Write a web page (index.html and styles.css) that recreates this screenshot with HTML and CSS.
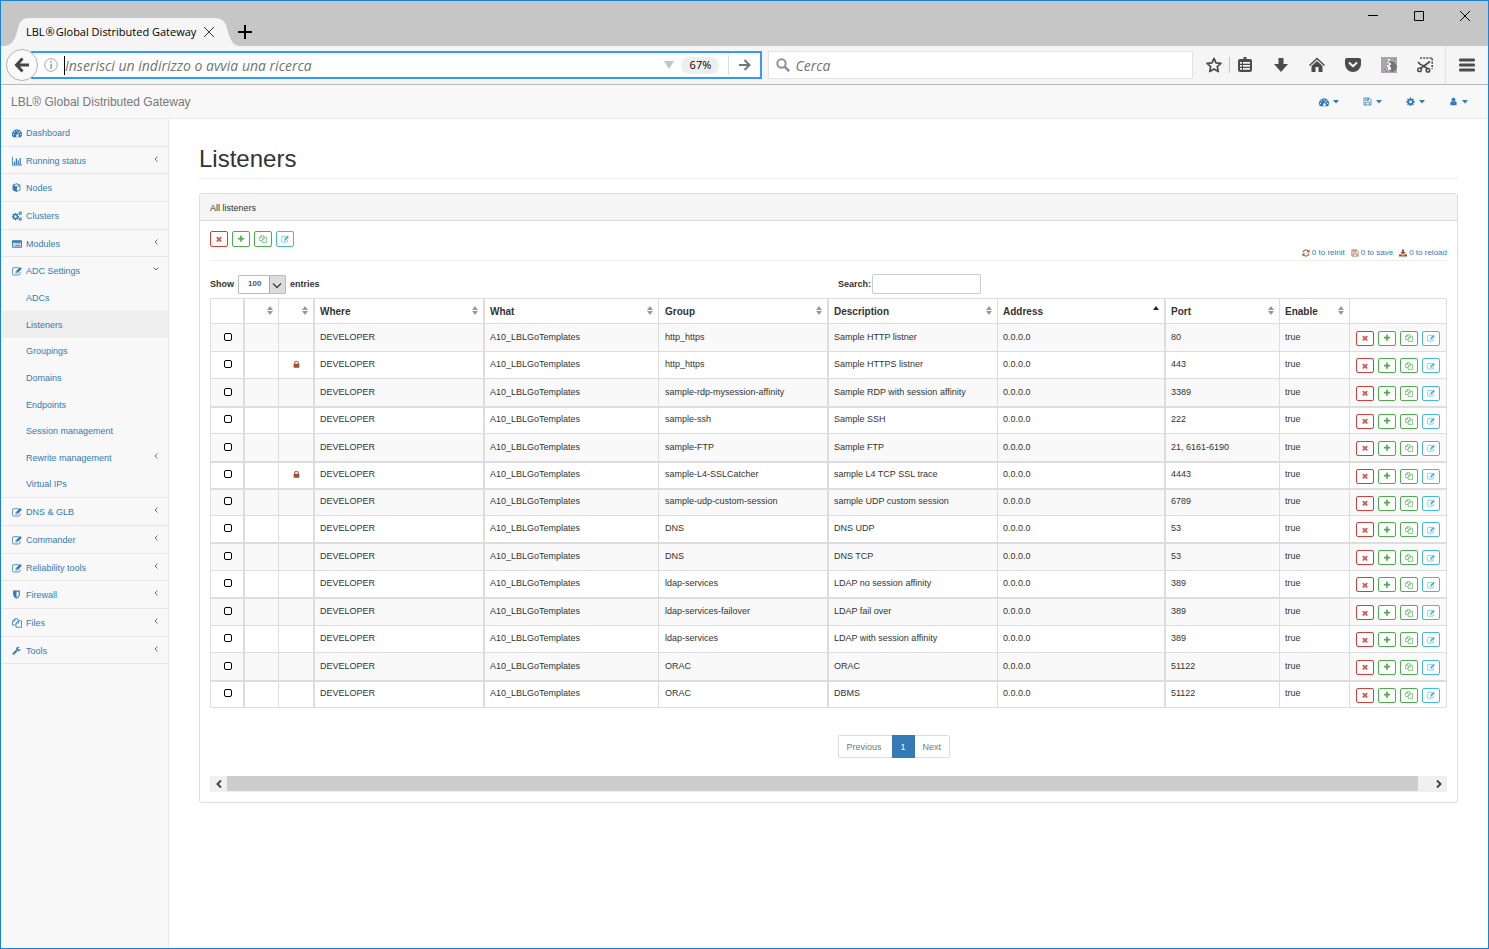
FILE: index.html
```html
<!DOCTYPE html>
<html lang="en">
<head>
<meta charset="utf-8">
<title>LBL® Global Distributed Gateway</title>
<link rel="stylesheet" href="styles.css">
</head>
<body>
<svg class="sprite" aria-hidden="true">
  <symbol id="i-times" viewBox="0 0 1792 1792"><path d="M1490 1322q0 40-28 68l-136 136q-28 28-68 28t-68-28l-294-294-294 294q-28 28-68 28t-68-28l-136-136q-28-28-28-68t28-68l294-294-294-294q-28-28-28-68t28-68l136-136q28-28 68-28t68 28l294 294 294-294q28-28 68-28t68 28l136 136q28 28 28 68t-28 68l-294 294 294 294q28 28 28 68z"/></symbol>
  <symbol id="i-plus" viewBox="0 0 1792 1792"><path d="M1600 736v192q0 40-28 68t-68 28h-416v416q0 40-28 68t-68 28h-192q-40 0-68-28t-28-68v-416h-416q-40 0-68-28t-28-68v-192q0-40 28-68t68-28h416v-416q0-40 28-68t68-28h192q40 0 68 28t28 68v416h416q40 0 68 28t28 68z"/></symbol>
  <symbol id="i-lock" viewBox="0 0 1792 1792"><path d="M640 768h512v-192q0-106-75-181t-181-75-181 75-75 181v192zm832 96v576q0 40-28 68t-68 28h-960q-40 0-68-28t-28-68v-576q0-40 28-68t68-28h32v-192q0-184 132-316t316-132 316 132 132 316v192h32q40 0 68 28t28 68z"/></symbol>
  <symbol id="i-user" viewBox="0 0 1792 1792"><path d="M1536 1399q0 109-62 187t-151 78h-854q-88 0-150-78t-63-187q0-85 9-160t31-152 58-131 94-89 135-35q131 128 313 128t313-128q76 0 135 35t94 89 58 131 31 152 9 160zm-256-887q0 159-112 272t-272 112-272-112-112-272 112-272 272-112 272 112 112 272z"/></symbol>
  <symbol id="i-wrench" viewBox="0 0 1792 1792"><path d="M448 1472q0-26-19-45t-45-19-45 19-19 45 19 45 45 19 45-19 19-45zm644-420l-682 682q-37 37-90 37-52 0-91-37l-106-108q-38-36-38-90 0-53 38-91l681-681q39 98 114 173t174 115zm634-435q0 39-23 106-47 134-164 217t-259 84q-185 0-316-132t-132-316 132-316 316-132q58 0 121 16t108 47q16 11 16 28t-16 28l-293 169v224l193 107q5-3 79-48t135-81 71-36q15 0 23 10t9 25z"/></symbol>
  <symbol id="i-dash" viewBox="0 0 16 16"><path fill-rule="evenodd" d="M8 2a8 8 0 0 0-6.700 12.300q.2.400.7.400h12q.5 0 .7-.4A8 8 0 0 0 8 2zM8 3.400a1.100 1.100 0 1 1 0 2.200 1.100 1.100 0 0 1 0-2.200zM4 5a1.100 1.100 0 1 1 0 2.200A1.100 1.100 0 0 1 4 5zM2.400 9a1.100 1.100 0 1 1 0 2.200 1.100 1.100 0 0 1 0-2.200zM13.600 9a1.100 1.100 0 1 1 0 2.200 1.100 1.100 0 0 1 0-2.200zM12 5a1.100 1.100 0 1 1 0 2.200A1.100 1.100 0 0 1 12 5zM9.900 6.500l.9.300-1.100 4a1.900 1.900 0 1 1-1-.3z"/></symbol>
  <symbol id="i-chart" viewBox="0 0 16 16"><path d="M0 1h1.300v12.700H16V15H0zM3 9h2v4H3zM6 4h2v9H6zM9 7h2v6H9zM12 3h2v10h-2z"/></symbol>
  <symbol id="i-cube" viewBox="0 0 16 16"><path fill-rule="evenodd" d="M8 .5l6.500 2.600q.5.300.5 1V12q0 .6-.5.900L8 15.900 1.500 12.900Q1 12.600 1 12V4.100q0-.7.5-1zM8 2L3 4l5 2 5-2zM8.800 14l4.700-2.200V5.500L8.800 7.400z"/></symbol>
  <symbol id="i-cogs" viewBox="0 0 16 16"><path fill-rule="evenodd" d="M4.600 3h1.800l.3 1.500 1 .4L9 4.200l1.200 1.200-.8 1.300.4 1 1.500.3v1.800l-1.500.3-.4 1 .8 1.300L9 13.600l-1.300-.8-1 .4-.3 1.500H4.600l-.3-1.500-1-.4-1.300.8-1.200-1.200.8-1.300-.4-1L0 9.800V8l1.200-.3.4-1-.8-1.300L2 4.200l1.300.7 1-.4zM5.500 6.800a2.100 2.100 0 1 0 0 4.200 2.100 2.100 0 0 0 0-4.200zM13 0l1 1.200h1.500V3l.5.800-1 1.300-.4 1.200-1.600-.4-1.300.3-.6-1.400L10 3.900l.8-1.200.2-1.300h1.300zM13 2.400a1 1 0 1 0 0 2 1 1 0 0 0 0-2zM13 9.500l1 1.200h1.500v1.600l.5 1-1 1.200-.4 1.200-1.600-.4-1.300.4-.6-1.500-1.100-.8.800-1.300.2-1.300h1.300zM13 11.800a1 1 0 1 0 0 2 1 1 0 0 0 0-2z"/></symbol>
  <symbol id="i-list" viewBox="0 0 16 16"><path fill-rule="evenodd" d="M1.300 2h13.400Q16 2 16 3.300v9.400q0 1.300-1.300 1.300H1.300Q0 14 0 12.700V3.300Q0 2 1.300 2zM1.500 6v6.500h13V6z"/><path d="M2.500 7h1.500v1.500H2.500zM5 7h8.500v1.500H5zM2.500 10h1.500v1.500H2.500zM5 10h8.500v1.500H5z"/></symbol>
  <symbol id="i-edit" viewBox="0 0 16 16"><path fill="none" stroke="currentColor" stroke-width="1.300" d="M11 2.700H3Q.7 2.700.7 5v7Q.7 14.300 3 14.300h7.500q2.300 0 2.300-2.300V9.800"/><path fill-rule="evenodd" d="M13 1.500L15.800 4.300 8.500 11.600H5.700V8.800zM6.800 9.300v1.200h1.200l.7-.7L7.500 8.600z"/></symbol>
  <symbol id="i-shield" viewBox="0 0 16 16"><path fill-rule="evenodd" d="M2 1h12v7.500q0 4-6 7-6-3-6-7zM8 3v10.300q4-2.200 4-4.800V3z"/></symbol>
  <symbol id="i-copy" viewBox="0 0 16 16"><path fill="none" stroke="currentColor" stroke-width="1.300" d="M6 11.300H.8V5L4.600 1.200h4.700V4M4.700 1.200v3.700H.8M6.400 8.200l3.800-3.800h5v10.400H6.400zM10.300 4.400v3.800H6.400"/></symbol>
  <symbol id="i-save" viewBox="0 0 16 16"><path fill="none" stroke="currentColor" stroke-width="1.300" d="M1.700 1.700h9.600l3 3v9.600H1.700zM4.200 14V9.500h7.600V14M4.200 2v4h6V2"/><path d="M7.500 2.300h1.800v2.900H7.500z"/></symbol>
  <symbol id="i-cog" viewBox="0 0 16 16"><path fill-rule="evenodd" d="M6.900 1h2.200l.4 2 1.400.6 1.700-1.100 1.600 1.600-1.200 1.600.6 1.400 2 .4v2.200l-2 .4-.6 1.300 1.200 1.700-1.600 1.600-1.700-1.200-1.400.6-.4 2H6.900l-.4-2-1.300-.6-1.700 1.200-1.600-1.600L3 11.400l-.5-1.300-2.100-.4V7.500l2.100-.4L3 5.700 1.900 4.100l1.600-1.600 1.700 1.100L6.500 3zM8 6a2.600 2.600 0 1 0 0 5.200A2.600 2.600 0 0 0 8 6z"/></symbol>
  <symbol id="i-refresh" viewBox="0 0 16 16"><path fill="none" stroke="currentColor" stroke-width="2.200" d="M2 6.800A6.200 6.200 0 0 1 12.700 4M14 9.200A6.200 6.200 0 0 1 3.300 12"/><path d="M15 1v6H9zM1 15V9h6z"/></symbol>
  <symbol id="i-down" viewBox="0 0 16 16"><path d="M6 1h4v5h3.500L8 11.500 2.500 6H6zM0 10.500h4.500L8 13.500l3.500-3H16V15H0z"/></symbol>
  <symbol id="i-left" viewBox="0 0 8 8"><path fill="none" stroke="currentColor" stroke-width="1" d="M5.500 1.500L3 4l2.500 2.500"/></symbol>
  <symbol id="i-open" viewBox="0 0 8 8"><path fill="none" stroke="currentColor" stroke-width="1" d="M1.500 2.500L4 5l2.500-2.500"/></symbol>
  <symbol id="i-caret" viewBox="0 0 6 4"><path d="M0 0h6L3 3.500z"/></symbol>
  <symbol id="i-sort" viewBox="0 0 8 9"><path d="M1 4L4 0l3 4zM1 5h6L4 9z"/></symbol>
</svg>

<div class="window">
  <header class="titlebar">
    <div class="tab">
      <svg class="tab-shape" viewBox="0 0 234 28" aria-hidden="true"><path fill="#f5f5f5" d="M0 28Q8 27 11 17L14 7Q16 0 24 0H210Q218 0 221 7L224 17Q227 27 234 28z"/></svg>
      <span class="tab-title">LBL<span class="reg">®</span>Global Distributed Gateway</span>
      <button class="plain tab-close" aria-label="Close tab"><svg viewBox="0 0 10 10"><path fill="none" stroke="#333" d="M0 0l10 10M10 0L0 10"/></svg></button>
    </div>
    <button class="plain tab-new" aria-label="New tab"><svg viewBox="0 0 14 14"><path d="M6 0h2v6h6v2H8v6H6V8H0V6h6z"/></svg></button>
    <div class="win-buttons">
      <button class="plain" aria-label="Minimize"><svg viewBox="0 0 10 10"><path fill="none" stroke="#000" d="M0 4.500h10"/></svg></button>
      <button class="plain" aria-label="Maximize"><svg viewBox="0 0 10 10"><path fill="none" stroke="#000" d="M.5.500h9v9h-9z"/></svg></button>
      <button class="plain" aria-label="Close"><svg viewBox="0 0 10 10"><path fill="none" stroke="#000" d="M0 0l10 10M10 0L0 10"/></svg></button>
    </div>
  </header>

  <div class="toolbar">
    <button class="plain back" aria-label="Back"><svg viewBox="0 0 16 16"><path fill="none" stroke="#474747" stroke-width="3" d="M15 8H3M8.500 1.500L2.500 8l6 6.500"/></svg></button>
    <div class="urlbar">
      <svg class="info" viewBox="0 0 14 14" aria-hidden="true"><circle cx="7" cy="7" r="6.300" fill="none" stroke="#a5a5a5"/><path fill="#999" d="M6.300 3h1.500v1.500H6.300zM6.300 5.800h1.500V11H6.300z"/></svg>
      <span class="cursor"></span>
      <input class="url-input" type="text" aria-label="Address" placeholder="Inserisci un indirizzo o avvia una ricerca">
      <svg class="drop" viewBox="0 0 10 8" aria-hidden="true"><path fill="#c4c4c4" d="M0 0h10L5 8z"/></svg>
      <button class="plain zoom">67%</button>
      <button class="plain go" aria-label="Go"><svg viewBox="0 0 12 12"><path fill="none" stroke="#737378" stroke-width="2" d="M0 6h10M5.500 1l5 5-5 5"/></svg></button>
    </div>
    <div class="searchbar">
      <svg class="glass" viewBox="0 0 14 14" aria-hidden="true"><circle cx="5.500" cy="5.500" r="4.200" fill="none" stroke="#938d98" stroke-width="2"/><path stroke="#938d98" stroke-width="2.600" d="M8.700 8.700l4.500 4.500"/></svg>
      <input class="search-input" type="search" aria-label="Search the web" placeholder="Cerca">
    </div>
    <div class="tools">
      <button class="plain tool star" aria-label="Bookmark"><svg viewBox="0 0 16 16"><path fill="none" stroke="#4c4c4c" stroke-width="1.700" stroke-linejoin="round" d="M8 1.300l2 4.600 5 .5-3.700 3.300 1 4.900L8 12.100l-4.300 2.500 1-4.900L1 6.400l5-.5z"/></svg></button>
      <button class="plain tool board" aria-label="Bookmarks list"><svg viewBox="0 0 16 16"><path fill="#4c4c4c" fill-rule="evenodd" d="M6.500 0h3v2H13q2 0 2 2v9q0 2-2 2H3q-2 0-2-2V4q0-2 2-2h3.500zM3 5v1.800h2V5zM6 5v1.800h7V5zM3 8v1.800h2V8zM6 8v1.800h7V8zM3 11v1.800h2V11zM6 11v1.800h7V11z"/></svg></button>
      <button class="plain tool" aria-label="Downloads"><svg viewBox="0 0 16 16"><path fill="#4c4c4c" d="M5.500 1h5v6H15l-7 8-7-8h4.500z"/></svg></button>
      <button class="plain tool" aria-label="Home"><svg viewBox="0 0 16 16"><path fill="#4c4c4c" d="M8 .5L16 8l-1 1-7-6.500L1 9 0 8zM8 4l5.500 5v6h-4v-5h-3v5h-4V9z"/></svg></button>
      <button class="plain tool" aria-label="Pocket"><svg viewBox="0 0 16 16"><path fill="#4c4c4c" d="M2 1h12q2 0 2 2v4a8 8 0 0 1-16 0V3q0-2 2-2z"/><path fill="none" stroke="#f5f5f5" stroke-width="2" stroke-linecap="round" stroke-linejoin="round" d="M4.500 6L8 9.300 11.500 6"/></svg></button>
      <button class="plain tool" aria-label="Archive"><svg viewBox="0 0 16 16"><path fill="#aaa4af" d="M0 0h16v16H0z"/><path fill="#77727a" d="M9 4l4 1 3 4-1 4-3 2-4-1zM3 12h1v1H3zM5 14h1v1H5zM13 2h1v1h-1z"/><path fill="#eee" d="M7 2h2v2H7zM6 5h2v1H6zM8 6h2v2H8zM6 8h3v2H6zM7 10h3v3H7z"/></svg></button>
      <button class="plain tool" aria-label="Capture"><svg viewBox="0 0 16 16"><path fill="none" stroke="#4c4c4c" stroke-width="1.600" stroke-dasharray="2 1.200" d="M3 1h12.200v11"/><path fill="none" stroke="#4c4c4c" stroke-width="1.700" d="M3.500 11.500L13 4.500M1 5q2 3 5 3.500l5 3.500"/><circle cx="2.500" cy="12.800" r="1.800" fill="none" stroke="#4c4c4c" stroke-width="1.500"/><circle cx="11" cy="13.300" r="1.800" fill="none" stroke="#4c4c4c" stroke-width="1.500"/></svg></button>
      <button class="plain tool menu" aria-label="Menu"><svg viewBox="0 0 16 14"><path fill="#4c4c4c" d="M1 0.500h14q1 0 1 1.500t-1 1.500H1Q0 3.500 0 2T1 .5zM1 5.500h14q1 0 1 1.500t-1 1.500H1Q0 8.500 0 7t1-1.500zM1 10.500h14q1 0 1 1.500t-1 1.500H1q-1 0-1-1.500t1-1.500z"/></svg></button>
    </div>
  </div>

  <nav class="navbar">
    <a class="brand" href="#">LBL® Global Distributed Gateway</a>
    <div class="nav-menus">
      <a href="#" aria-label="Dashboard menu"><svg class="icon wide"><use href="#i-dash"/></svg><svg class="caret"><use href="#i-caret"/></svg></a>
      <a href="#" aria-label="Save menu"><svg class="icon"><use href="#i-save"/></svg><svg class="caret"><use href="#i-caret"/></svg></a>
      <a href="#" aria-label="Settings menu"><svg class="icon"><use href="#i-cog"/></svg><svg class="caret"><use href="#i-caret"/></svg></a>
      <a href="#" aria-label="User menu"><svg class="icon"><use href="#i-user"/></svg><svg class="caret"><use href="#i-caret"/></svg></a>
    </div>
  </nav>

  <div class="body">
    <aside class="sidebar">
      <ul class="side-list">
        <li><a href="#"><svg class="icon wide"><use href="#i-dash"/></svg>Dashboard</a></li>
        <li class="low"><a href="#"><svg class="icon wide"><use href="#i-chart"/></svg>Running status<svg class="arrow"><use href="#i-left"/></svg></a></li>
        <li><a href="#"><svg class="icon"><use href="#i-cube"/></svg>Nodes</a></li>
        <li><a href="#"><svg class="icon wide"><use href="#i-cogs"/></svg>Clusters</a></li>
        <li class="low"><a href="#"><svg class="icon wide"><use href="#i-list"/></svg>Modules<svg class="arrow"><use href="#i-left"/></svg></a></li>
        <li class="open"><a href="#"><svg class="icon wide"><use href="#i-edit"/></svg>ADC Settings<svg class="arrow"><use href="#i-open"/></svg></a>
          <ul class="sub-list">
            <li><a href="#">ADCs</a></li>
            <li><a class="active" href="#">Listeners</a></li>
            <li><a href="#">Groupings</a></li>
            <li><a href="#">Domains</a></li>
            <li><a href="#">Endpoints</a></li>
            <li><a href="#">Session management</a></li>
            <li><a href="#">Rewrite management<svg class="arrow"><use href="#i-left"/></svg></a></li>
            <li><a href="#">Virtual IPs</a></li>
          </ul>
        </li>
        <li><a href="#"><svg class="icon wide"><use href="#i-edit"/></svg>DNS &amp; GLB<svg class="arrow"><use href="#i-left"/></svg></a></li>
        <li><a href="#"><svg class="icon wide"><use href="#i-edit"/></svg>Commander<svg class="arrow"><use href="#i-left"/></svg></a></li>
        <li class="low"><a href="#"><svg class="icon wide"><use href="#i-edit"/></svg>Reliability tools<svg class="arrow"><use href="#i-left"/></svg></a></li>
        <li><a href="#"><svg class="icon"><use href="#i-shield"/></svg>Firewall<svg class="arrow"><use href="#i-left"/></svg></a></li>
        <li><a href="#"><svg class="icon wide"><use href="#i-copy"/></svg>Files<svg class="arrow"><use href="#i-left"/></svg></a></li>
        <li class="low"><a href="#"><svg class="icon"><use href="#i-wrench"/></svg>Tools<svg class="arrow"><use href="#i-left"/></svg></a></li>
      </ul>
    </aside>

    <main class="content">
      <h1>Listeners</h1>
      <section class="panel">
        <h2 class="panel-heading">All listeners</h2>
        <div class="panel-body">
          <div class="actions-bar">
            <div class="group"><button class="btn red" aria-label="Delete"><svg><use href="#i-times"/></svg></button><button class="btn green" aria-label="Add"><svg><use href="#i-plus"/></svg></button><button class="btn green" aria-label="Copy"><svg><use href="#i-copy"/></svg></button><button class="btn blue" aria-label="Edit"><svg><use href="#i-edit"/></svg></button></div>
            <div class="pending">
              <a href="#"><svg><use href="#i-refresh"/></svg>0 to reinit</a>
              <a href="#"><svg><use href="#i-save"/></svg>0 to save</a>
              <a href="#"><svg><use href="#i-down"/></svg>0 to reload</a>
            </div>
          </div>
          <div class="filters">
            <div class="length"><label for="len">Show</label>
              <span class="select-box"><select id="len"><option>100</option></select><svg viewBox="0 0 10 6"><path fill="none" stroke="#444" stroke-width="1.400" d="M1 .5l4 4 4-4"/></svg></span>
              <span>entries</span></div>
            <div class="find"><label for="find">Search:</label><input id="find" type="text"></div>
          </div>
          <table class="grid">
            <colgroup><col class="c-check"><col class="c-flag"><col class="c-flag"><col class="c-where"><col class="c-what"><col class="c-group"><col class="c-desc"><col class="c-addr"><col class="c-port"><col class="c-enable"><col class="c-act"></colgroup>
            <thead>
              <tr><th></th><th><svg class="sort"><use href="#i-sort"/></svg></th><th><svg class="sort"><use href="#i-sort"/></svg></th><th>Where<svg class="sort"><use href="#i-sort"/></svg></th><th>What<svg class="sort"><use href="#i-sort"/></svg></th><th>Group<svg class="sort"><use href="#i-sort"/></svg></th><th>Description<svg class="sort"><use href="#i-sort"/></svg></th><th>Address<svg class="sort up" viewBox="0 0 8 9"><path d="M1 4L4 0l3 4z"/></svg></th><th>Port<svg class="sort"><use href="#i-sort"/></svg></th><th>Enable<svg class="sort"><use href="#i-sort"/></svg></th><th></th></tr>
            </thead>
            <tbody>
              <tr><td><input type="checkbox" aria-label="Select row 1"></td><td></td><td></td><td>DEVELOPER</td><td>A10_LBLGoTemplates</td><td>http_https</td><td>Sample HTTP listner</td><td>0.0.0.0</td><td>80</td><td>true</td><td><div class="group"><button class="btn red" aria-label="Delete"><svg><use href="#i-times"/></svg></button><button class="btn green" aria-label="Add"><svg><use href="#i-plus"/></svg></button><button class="btn green" aria-label="Copy"><svg><use href="#i-copy"/></svg></button><button class="btn blue" aria-label="Edit"><svg><use href="#i-edit"/></svg></button></div></td></tr>
              <tr><td><input type="checkbox" aria-label="Select row 2"></td><td></td><td><svg class="lock"><use href="#i-lock"/></svg></td><td>DEVELOPER</td><td>A10_LBLGoTemplates</td><td>http_https</td><td>Sample HTTPS listner</td><td>0.0.0.0</td><td>443</td><td>true</td><td><div class="group"><button class="btn red" aria-label="Delete"><svg><use href="#i-times"/></svg></button><button class="btn green" aria-label="Add"><svg><use href="#i-plus"/></svg></button><button class="btn green" aria-label="Copy"><svg><use href="#i-copy"/></svg></button><button class="btn blue" aria-label="Edit"><svg><use href="#i-edit"/></svg></button></div></td></tr>
              <tr><td><input type="checkbox" aria-label="Select row 3"></td><td></td><td></td><td>DEVELOPER</td><td>A10_LBLGoTemplates</td><td>sample-rdp-mysession-affinity</td><td>Sample RDP with session affinity</td><td>0.0.0.0</td><td>3389</td><td>true</td><td><div class="group"><button class="btn red" aria-label="Delete"><svg><use href="#i-times"/></svg></button><button class="btn green" aria-label="Add"><svg><use href="#i-plus"/></svg></button><button class="btn green" aria-label="Copy"><svg><use href="#i-copy"/></svg></button><button class="btn blue" aria-label="Edit"><svg><use href="#i-edit"/></svg></button></div></td></tr>
              <tr class="thick"><td><input type="checkbox" aria-label="Select row 4"></td><td></td><td></td><td>DEVELOPER</td><td>A10_LBLGoTemplates</td><td>sample-ssh</td><td>Sample SSH</td><td>0.0.0.0</td><td>222</td><td>true</td><td><div class="group"><button class="btn red" aria-label="Delete"><svg><use href="#i-times"/></svg></button><button class="btn green" aria-label="Add"><svg><use href="#i-plus"/></svg></button><button class="btn green" aria-label="Copy"><svg><use href="#i-copy"/></svg></button><button class="btn blue" aria-label="Edit"><svg><use href="#i-edit"/></svg></button></div></td></tr>
              <tr><td><input type="checkbox" aria-label="Select row 5"></td><td></td><td></td><td>DEVELOPER</td><td>A10_LBLGoTemplates</td><td>sample-FTP</td><td>Sample FTP</td><td>0.0.0.0</td><td>21, 6161-6190</td><td>true</td><td><div class="group"><button class="btn red" aria-label="Delete"><svg><use href="#i-times"/></svg></button><button class="btn green" aria-label="Add"><svg><use href="#i-plus"/></svg></button><button class="btn green" aria-label="Copy"><svg><use href="#i-copy"/></svg></button><button class="btn blue" aria-label="Edit"><svg><use href="#i-edit"/></svg></button></div></td></tr>
              <tr class="thick"><td><input type="checkbox" aria-label="Select row 6"></td><td></td><td><svg class="lock"><use href="#i-lock"/></svg></td><td>DEVELOPER</td><td>A10_LBLGoTemplates</td><td>sample-L4-SSLCatcher</td><td>sample L4 TCP SSL trace</td><td>0.0.0.0</td><td>4443</td><td>true</td><td><div class="group"><button class="btn red" aria-label="Delete"><svg><use href="#i-times"/></svg></button><button class="btn green" aria-label="Add"><svg><use href="#i-plus"/></svg></button><button class="btn green" aria-label="Copy"><svg><use href="#i-copy"/></svg></button><button class="btn blue" aria-label="Edit"><svg><use href="#i-edit"/></svg></button></div></td></tr>
              <tr class="thick low"><td><input type="checkbox" aria-label="Select row 7"></td><td></td><td></td><td>DEVELOPER</td><td>A10_LBLGoTemplates</td><td>sample-udp-custom-session</td><td>sample UDP custom session</td><td>0.0.0.0</td><td>6789</td><td>true</td><td><div class="group"><button class="btn red" aria-label="Delete"><svg><use href="#i-times"/></svg></button><button class="btn green" aria-label="Add"><svg><use href="#i-plus"/></svg></button><button class="btn green" aria-label="Copy"><svg><use href="#i-copy"/></svg></button><button class="btn blue" aria-label="Edit"><svg><use href="#i-edit"/></svg></button></div></td></tr>
              <tr><td><input type="checkbox" aria-label="Select row 8"></td><td></td><td></td><td>DEVELOPER</td><td>A10_LBLGoTemplates</td><td>DNS</td><td>DNS UDP</td><td>0.0.0.0</td><td>53</td><td>true</td><td><div class="group"><button class="btn red" aria-label="Delete"><svg><use href="#i-times"/></svg></button><button class="btn green" aria-label="Add"><svg><use href="#i-plus"/></svg></button><button class="btn green" aria-label="Copy"><svg><use href="#i-copy"/></svg></button><button class="btn blue" aria-label="Edit"><svg><use href="#i-edit"/></svg></button></div></td></tr>
              <tr class="thick"><td><input type="checkbox" aria-label="Select row 9"></td><td></td><td></td><td>DEVELOPER</td><td>A10_LBLGoTemplates</td><td>DNS</td><td>DNS TCP</td><td>0.0.0.0</td><td>53</td><td>true</td><td><div class="group"><button class="btn red" aria-label="Delete"><svg><use href="#i-times"/></svg></button><button class="btn green" aria-label="Add"><svg><use href="#i-plus"/></svg></button><button class="btn green" aria-label="Copy"><svg><use href="#i-copy"/></svg></button><button class="btn blue" aria-label="Edit"><svg><use href="#i-edit"/></svg></button></div></td></tr>
              <tr><td><input type="checkbox" aria-label="Select row 10"></td><td></td><td></td><td>DEVELOPER</td><td>A10_LBLGoTemplates</td><td>ldap-services</td><td>LDAP no session affinity</td><td>0.0.0.0</td><td>389</td><td>true</td><td><div class="group"><button class="btn red" aria-label="Delete"><svg><use href="#i-times"/></svg></button><button class="btn green" aria-label="Add"><svg><use href="#i-plus"/></svg></button><button class="btn green" aria-label="Copy"><svg><use href="#i-copy"/></svg></button><button class="btn blue" aria-label="Edit"><svg><use href="#i-edit"/></svg></button></div></td></tr>
              <tr class="thick"><td><input type="checkbox" aria-label="Select row 11"></td><td></td><td></td><td>DEVELOPER</td><td>A10_LBLGoTemplates</td><td>ldap-services-failover</td><td>LDAP fail over</td><td>0.0.0.0</td><td>389</td><td>true</td><td><div class="group"><button class="btn red" aria-label="Delete"><svg><use href="#i-times"/></svg></button><button class="btn green" aria-label="Add"><svg><use href="#i-plus"/></svg></button><button class="btn green" aria-label="Copy"><svg><use href="#i-copy"/></svg></button><button class="btn blue" aria-label="Edit"><svg><use href="#i-edit"/></svg></button></div></td></tr>
              <tr><td><input type="checkbox" aria-label="Select row 12"></td><td></td><td></td><td>DEVELOPER</td><td>A10_LBLGoTemplates</td><td>ldap-services</td><td>LDAP with session affinity</td><td>0.0.0.0</td><td>389</td><td>true</td><td><div class="group"><button class="btn red" aria-label="Delete"><svg><use href="#i-times"/></svg></button><button class="btn green" aria-label="Add"><svg><use href="#i-plus"/></svg></button><button class="btn green" aria-label="Copy"><svg><use href="#i-copy"/></svg></button><button class="btn blue" aria-label="Edit"><svg><use href="#i-edit"/></svg></button></div></td></tr>
              <tr><td><input type="checkbox" aria-label="Select row 13"></td><td></td><td></td><td>DEVELOPER</td><td>A10_LBLGoTemplates</td><td>ORAC</td><td>ORAC</td><td>0.0.0.0</td><td>51122</td><td>true</td><td><div class="group"><button class="btn red" aria-label="Delete"><svg><use href="#i-times"/></svg></button><button class="btn green" aria-label="Add"><svg><use href="#i-plus"/></svg></button><button class="btn green" aria-label="Copy"><svg><use href="#i-copy"/></svg></button><button class="btn blue" aria-label="Edit"><svg><use href="#i-edit"/></svg></button></div></td></tr>
              <tr class="thick"><td><input type="checkbox" aria-label="Select row 14"></td><td></td><td></td><td>DEVELOPER</td><td>A10_LBLGoTemplates</td><td>ORAC</td><td>DBMS</td><td>0.0.0.0</td><td>51122</td><td>true</td><td><div class="group"><button class="btn red" aria-label="Delete"><svg><use href="#i-times"/></svg></button><button class="btn green" aria-label="Add"><svg><use href="#i-plus"/></svg></button><button class="btn green" aria-label="Copy"><svg><use href="#i-copy"/></svg></button><button class="btn blue" aria-label="Edit"><svg><use href="#i-edit"/></svg></button></div></td></tr>
            </tbody>
          </table>
          <div class="pager"><a href="#">Previous</a><a class="current" href="#">1</a><a href="#">Next</a></div>
          <div class="scrollbar">
            <button class="plain" aria-label="Scroll left"><svg viewBox="0 0 6 8"><path fill="none" stroke="#444" stroke-width="2" d="M5 .5L1.500 4 5 7.500"/></svg></button>
            <div class="track"><div class="thumb"></div></div>
            <button class="plain" aria-label="Scroll right"><svg viewBox="0 0 6 8"><path fill="none" stroke="#444" stroke-width="2" d="M1 .5L4.500 4 1 7.500"/></svg></button>
          </div>
        </div>
      </section>
    </main>
  </div>
</div>
</body>
</html>
```

FILE: styles.css
```css
* { box-sizing: border-box; }
body {
  margin: 0;
  font: 9px/12px "Liberation Sans", Arial, sans-serif;
  color: #333;
  background: #fff;
}
svg { display: block; fill: currentColor; flex: none; }
a { color: #337ab7; text-decoration: none; }
ul { list-style: none; margin: 0; padding: 0; }
.sprite { position: absolute; width: 0; height: 0; overflow: hidden; }
.plain { border: 0; background: none; padding: 0; margin: 0; font: inherit; color: inherit; display: flex; align-items: center; justify-content: center; }
.window { display: flex; flex-direction: column; min-height: 100vh; border: 1px solid #1883d7; }

/* Title bar */
.titlebar { display: flex; align-items: flex-end; height: 45px; background: #c6c6c6; padding-left: 4px; }
.tab { position: relative; display: flex; align-items: center; gap: 8px; width: 233px; height: 28px; padding-left: 21px; }
.tab-shape { position: absolute; left: 0; top: 0; width: 234px; height: 28px; }
.tab-title { position: relative; font: 11px/16px "Open Sans", sans-serif; color: #000; white-space: nowrap; }
.reg { padding: 0 1px; }
.tab-close { position: relative; }
.tab-close svg { width: 10px; height: 10px; }
.tab-new { height: 28px; color: #000; }
.tab-new svg { width: 14px; height: 14px; }
.win-buttons { display: flex; align-self: flex-start; margin-left: auto; }
.win-buttons button { width: 46px; height: 30px; }
.win-buttons svg { width: 10px; height: 10px; }

/* Toolbar */
.toolbar { display: flex; align-items: center; height: 39px; padding-left: 5px; background: #f5f5f5; border-bottom: 1px solid #bababa; }
.back { position: relative; z-index: 1; width: 32px; height: 32px; border: 1px solid #b5b5b5; border-radius: 50%; background: #fafafa; flex: none; }
.back svg { width: 16px; height: 16px; }
.urlbar { display: flex; align-items: center; flex: 731 1 0; min-width: 0; height: 28px; margin-left: -7px; padding-left: 13px; background: #fff; border: 2px solid #3399ff; border-left: 0; }
.info { width: 14px; height: 14px; }
.cursor { width: 1px; height: 19px; margin-left: 6px; background: #000; }
.url-input, .search-input { flex: 1; min-width: 0; height: 22px; border: 0; padding: 0; background: none; outline: 0; font: 14px/20px "Open Sans", sans-serif; }
.url-input::placeholder, .search-input::placeholder { color: #737373; opacity: 1; font-style: italic; }
.drop { width: 10px; height: 8px; }
.zoom { width: 38px; height: 17px; margin: 0 9px 0 7px; border-radius: 9px; background: #eee; font: 11px/16px "Open Sans", sans-serif; color: #000; }
.go { width: 32px; height: 20px; border-left: 1px solid #ddd; }
.go svg { width: 12px; height: 12px; }
.searchbar { display: flex; align-items: center; gap: 5px; flex: 424 1 0; min-width: 0; height: 28px; margin-left: 6px; padding-left: 7px; background: #fff; border: 1px solid #e3e3e3; }
.glass { width: 14px; height: 14px; }
.tools { display: flex; align-items: center; padding-left: 5px; }
.tool { width: 36px; height: 38px; }
.tool svg { width: 16px; height: 16px; }
.tool.star { width: 31px; }
.tool.board { width: 31px; justify-content: flex-start; margin-right: 3px; }
.tool.board::before { content: ""; width: 1px; height: 16px; margin-right: 7px; background: #c4c4c4; }
.tool.menu { width: 43px; margin-left: 2px; border-left: 1px solid #e0e0e0; }
.tool.menu svg { height: 14px; }

/* Navigation */
.navbar { display: flex; align-items: center; justify-content: space-between; height: 34px; padding: 0 20px 0 10px; background: #f8f8f8; border-bottom: 1px solid #e7e7e7; }
.brand { font-size: 12px; line-height: 16px; color: #777; }
.nav-menus { display: flex; gap: 24px; }
.nav-menus a { display: flex; align-items: center; gap: 4px; }
.icon { width: 9px; height: 9px; }
.icon.wide { width: 10px; height: 10px; }
.caret { width: 6px; height: 4px; }
.body { display: flex; flex: 1; }
.sidebar { width: 168px; flex: none; background: #f8f8f8; border-right: 1px solid #e7e7e7; }
.side-list > li { border-bottom: 1px solid #e7e7e7; }
.side-list a { display: flex; align-items: center; height: 27px; padding: 0 8px 0 11px; }
.side-list .low > a { height: 26px; padding-top: 1px; }
.side-list .icon { margin-right: 5px; }
.side-list .icon.wide { margin-right: 4px; }
.side-list .arrow { width: 8px; height: 8px; margin: 0 0 4px auto; }
.side-list .sub-list a { padding-left: 25px; }
.side-list .sub-list li:nth-child(3n) a, .side-list .sub-list li:last-child a { height: 26px; }
.side-list .sub-list .active { background: #eee; }

/* Content */
.content { flex: 1; min-width: 0; padding: 25px 30px; }
h1 { margin: 0 0 14px; padding-bottom: 5px; border-bottom: 1px solid #eee; font-size: 24px; line-height: 29px; font-weight: 400; }
.panel { border: 1px solid #ddd; border-radius: 3px; }
.panel-heading { margin: 0; padding: 8px 10px 6px; font-size: 9px; line-height: 12px; font-weight: 400; background: #f5f5f5; border-bottom: 1px solid #ddd; }
.panel-body { padding: 10px; }
.actions-bar { display: flex; justify-content: space-between; align-items: flex-start; height: 30px; border-bottom: 1px solid #eee; }
.group { display: flex; gap: 4px; }
.btn { display: flex; align-items: center; justify-content: center; width: 18px; height: 16px; padding: 0; background: #fff; border: 1px solid; border-radius: 2px; }
.btn svg { width: 8px; height: 8px; }
.red { color: #d9534f; border-color: #d43f3a; }
.green { color: #4cae4c; }
.blue { color: #46b8da; }
.pending { display: flex; gap: 6px; align-self: flex-end; padding-bottom: 1px; font-size: 8px; }
.pending a { display: flex; align-items: center; gap: 2px; }
.pending svg { width: 8px; height: 8px; color: #a0522d; }
.filters { display: flex; align-items: center; height: 37px; padding-top: 9px; font-weight: 700; }
.length { display: flex; align-items: center; gap: 4px; flex: 1; }
.select-box { position: relative; display: flex; }
.select-box select { appearance: none; width: 48px; height: 19px; padding: 0 0 0 9px; border: 1px solid #bbb; border-radius: 1px; font: 700 8px/16px "Liberation Sans", Arial, sans-serif; color: #555; background: linear-gradient(90deg, #fff 30px, #a9a5ae 30px, #a9a5ae 31px, #dcdcdf 31px); }
.select-box svg { position: absolute; right: 4px; top: 8px; width: 10px; height: 6px; pointer-events: none; }
.find { display: flex; align-items: center; gap: 1px; flex: 1; padding-left: 19px; }
.find input { width: 109px; height: 20px; padding: 0 4px; border: 1px solid #ccc; border-radius: 2px; font: inherit; }

/* Table */
.grid { width: 100%; min-width: 900px; table-layout: fixed; border-collapse: separate; border-spacing: 0; border: 0 solid #ddd; border-width: 0 1px 1px 0; border-radius: 2px; }
.c-check { width: 33px; }
.c-flag { width: 35px; }
.c-where, .c-desc { width: 170px; }
.c-what { width: 175px; }
.c-group { width: 169px; }
.c-addr { width: 167px; }
.c-port { width: 115px; }
.c-enable { width: 70px; }
.c-act { width: 97px; }
.grid th, .grid td { position: relative; padding: 0 5px; border: 0 solid #ddd; border-width: 1px 0 0 1px; text-align: left; white-space: nowrap; }
.grid th { height: 25px; padding-top: 2px; font-size: 10px; }
.grid tr > :nth-child(2), .grid tr > :nth-child(4), .grid tr > :nth-child(5), .grid tr > :nth-child(7), .grid tr > :nth-child(9) { border-left-width: 2px; }
.grid tr > :nth-child(6) { padding-left: 6px; }
.grid td { height: 27px; padding-bottom: 2px; line-height: 12px; }
.grid tbody tr:nth-child(odd) td { height: 28px; background: #f9f9f9; }
.grid tbody tr.low td { height: 27px; }
.grid .thick td { border-top-width: 2px; padding-bottom: 3px; }
.grid tr > :nth-child(3), .grid td:first-child { text-align: center; }
.grid tbody td:last-child { padding: 1px 0 0 6px; }
.grid td .btn { height: 15px; }
.grid input { appearance: none; display: block; width: 8px; height: 8px; margin: 0 auto; border: 1px solid #000; border-radius: 2px; background: #fff; }
.grid td:first-child { padding-left: 7px; }
.sort { position: absolute; right: 4px; top: 7px; width: 8px; height: 9px; color: #999; }
.sort.up { color: #222; }
.lock { width: 9px; height: 9px; margin: 0 auto; color: #a0522d; }

.pager { display: flex; margin: 27px 0 18px; padding-left: calc(50% + 9px); }
.pager a { height: 23px; padding: 5px 8px; border: 1px solid #ddd; color: #777; }
.pager a:first-child { padding-right: 10px; border-right: 0; border-radius: 2px 0 0 2px; }
.pager a:last-child { border-left: 0; border-radius: 0 2px 2px 0; }
.pager .current { background: #337ab7; border-color: #337ab7; color: #fff; }
.scrollbar { display: flex; height: 16px; background: #f0f0f0; }
.scrollbar button { width: 17px; height: 15px; }
.scrollbar svg { width: 6px; height: 8px; }
.track { flex: 1; }
.thumb { width: 99%; height: 15px; background: #cdcdcd; }
```
